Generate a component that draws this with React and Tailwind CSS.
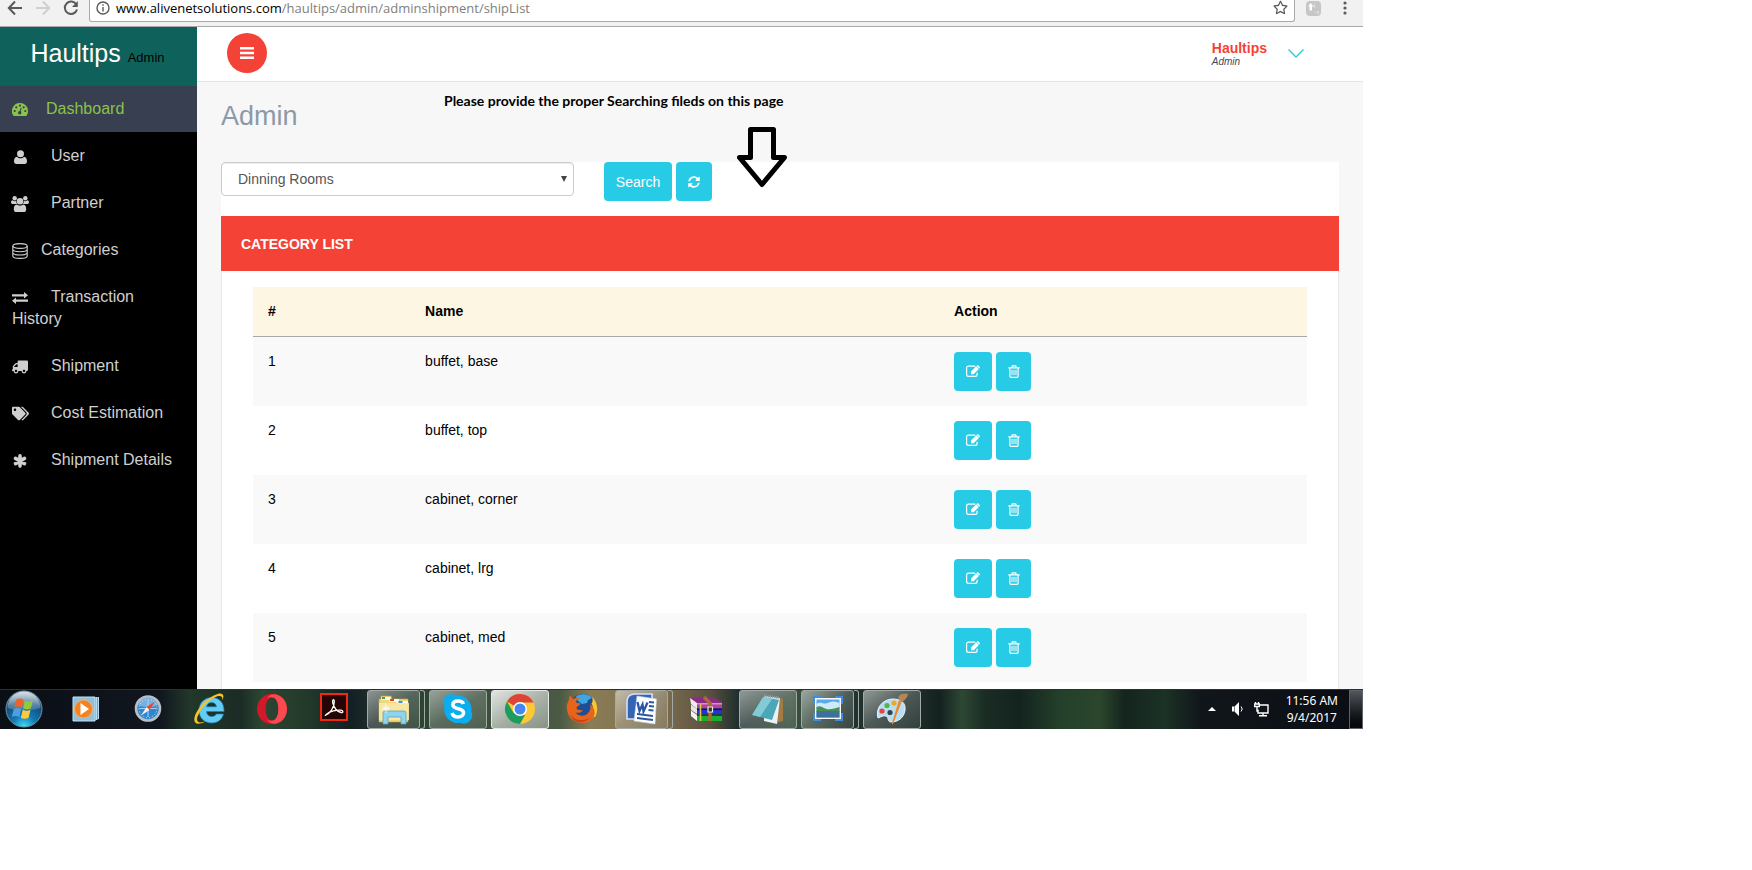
import React from "react";
import { FaTruck, FaTags, FaSyncAlt, FaRegStar } from "react-icons/fa";

const ARIAL = "font-['Liberation_Sans',Arial,sans-serif]";

function IconGauge() {
  return (
    <svg viewBox="0 0 16 13" className="h-[13px] w-4" aria-hidden="true">
      <path d="M8 0a8 8 0 0 1 8 8c0 1.700-.5 3.200-1.300 4.500-.2.300-.5.500-.8.500H2.100c-.3 0-.6-.2-.8-.5A8 8 0 0 1 8 0z" fill="#8bc34a" />
      <g fill="#373f50">
        <circle cx="2.700" cy="8" r="1.100" /><circle cx="4.300" cy="4.300" r="1.100" /><circle cx="8" cy="2.600" r="1.100" /><circle cx="11.700" cy="4.300" r="1.100" /><circle cx="13.300" cy="8" r="1.100" />
        <circle cx="7.700" cy="9.700" r="1.700" /><path d="m8.700 4.800 1 .3-1.200 4.700-1-.3z" />
      </g>
    </svg>
  );
}

function IconUser() {
  return (
    <svg viewBox="0 0 13 14" className="h-[14px] w-[13px]" fill="currentColor" aria-hidden="true">
      <circle cx="6.500" cy="3.700" r="3.500" />
      <path d="M3 6.700C4 7.700 5.200 8.200 6.500 8.200S9 7.700 10 6.700c2.200.2 3 2.300 3 4.800 0 1.600-1 2.500-2.400 2.500H2.400C1 14 0 13.100 0 11.500c0-2.500.8-4.600 3-4.800z" />
    </svg>
  );
}

function IconUsers() {
  return (
    <svg viewBox="0 0 18 16" className="h-4 w-[18px]" fill="currentColor" aria-hidden="true">
      <circle cx="3.700" cy="2.300" r="2.200" /><circle cx="14.300" cy="2.300" r="2.200" />
      <circle cx="9" cy="5.300" r="3.300" />
      <path d="M1.700 4.300c1.200 1 2.400 1 3.400.5 0 1.200.3 2.300 1 3.200H2C.7 8 0 7.300 0 6.500c0-1 .5-2.300 1.700-2.200zM16.300 4.300c-1.200 1-2.400 1-3.400.5 0 1.200-.3 2.300-1 3.200H16c1.300 0 2-.7 2-1.500 0-1-.5-2.300-1.700-2.200z" />
      <path d="M5.700 8.500c2 1.500 4.600 1.500 6.600 0 2.200.1 2.900 2.200 2.900 4.900 0 1.600-1 2.600-2.600 2.600H5.400c-1.600 0-2.600-1-2.600-2.600 0-2.700.7-4.800 2.900-4.900z" />
    </svg>
  );
}

function IconAsterisk() {
  return (
    <svg viewBox="0 0 14 14" className="size-[14px]" fill="none" stroke="currentColor" strokeWidth="3.600" strokeLinecap="round" aria-hidden="true">
      <path d="M7 1.900v10.200M2.500 4.400l9 5.200M11.500 4.400l-9 5.200" />
    </svg>
  );
}

function IconExchange() {
  return (
    <svg viewBox="0 0 16 12" className="h-3 w-4" fill="currentColor" aria-hidden="true">
      <path d="M0 2.200h12V0l4 3.300-4 3.200V4.400H0zM16 7.600H4V5.500L0 8.800 4 12V9.800h12z" />
    </svg>
  );
}

function IconDatabase() {
  return (
    <svg viewBox="0 0 16 16" className="h-4 w-4" fill="none" stroke="currentColor" strokeWidth="1.100" aria-hidden="true">
      <ellipse cx="8" cy="3" rx="7.200" ry="2.400" />
      <path d="M.8 3v10c0 1.300 3.200 2.400 7.200 2.400s7.200-1.100 7.200-2.400V3M.8 6.300c0 1.300 3.200 2.400 7.200 2.400s7.200-1.100 7.200-2.400M.8 9.600C.8 10.900 4 12 8 12s7.200-1.100 7.200-2.400" />
    </svg>
  );
}

function IconEdit() {
  return (
    <svg viewBox="0 0 14 12" className="h-3 w-[14px]" aria-hidden="true">
      <path d="M9.300 1.100H2.600Q.6 1.100.6 3v6.500q0 1.900 2 1.900h6.500q2 0 2-1.900V7.700" fill="none" stroke="currentColor" strokeWidth="1.200" />
      <path d="M5 9.200V6.500L10.200 1.300l2.700 2.700L7.700 9.200zM10.900.6q.8-.8 1.500-.1l1.200 1.200q.7.700-.1 1.500l-.3.300L10.600.9z" fill="currentColor" />
    </svg>
  );
}

function IconTrash() {
  return (
    <svg viewBox="0 0 12 13" className="h-[13px] w-3" fill="none" stroke="currentColor" strokeWidth="1.200" aria-hidden="true">
      <path d="M.3 2.900h11.400M3.700 2.700 4.300.9h3.400l.6 1.800M1.900 3v8q0 1.300 1.100 1.300h6q1.100 0 1.100-1.300V3" />
      <path d="M4 4.800v5.400M6 4.800v5.400M8 4.800v5.400" strokeWidth="1" />
    </svg>
  );
}

const NAV = [
  { label: "Dashboard", icon: <IconGauge />, gap: "pl-[18px]", active: true },
  { label: "User", icon: <IconUser />, gap: "pl-[23px]" },
  { label: "Partner", icon: <IconUsers />, gap: "pl-[23px]" },
  { label: "Categories", icon: <IconDatabase />, gap: "pl-[13px]" },
  { label: "Transaction History", icon: <IconExchange />, gap: "pl-[23px]" },
  { label: "Shipment", icon: <FaTruck size={16} className="-scale-x-100" />, gap: "pl-[23px]" },
  { label: "Cost Estimation", icon: <FaTags size={17} />, gap: "pl-[23px]" },
  { label: "Shipment Details", icon: <IconAsterisk />, gap: "pl-[23px]" },
];

const ROWS = ["buffet, base", "buffet, top", "cabinet, corner", "cabinet, lrg", "cabinet, med"];

function BrowserBar() {
  return (
    <div className="flex h-[27px] items-start border-b border-[#a9a9a9] bg-[#f1f1f1] text-[#5a5a5a]">
      <div className="flex h-4 w-[89px] shrink-0 items-center gap-3 pl-[7px]">
        <button type="button" aria-label="Back">
          <svg viewBox="0 0 16 16" className="size-4" fill="none" stroke="currentColor" strokeWidth="2"><path d="M15 8H2M8 1.500 1.800 8 8 14.500" /></svg>
        </button>
        <button type="button" aria-label="Forward" className="text-[#d0d0d0]">
          <svg viewBox="0 0 16 16" className="size-4" fill="none" stroke="currentColor" strokeWidth="2"><path d="M1 8h13M8 1.500 14.200 8 8 14.500" /></svg>
        </button>
        <button type="button" aria-label="Reload">
          <svg viewBox="0 0 16 16" className="size-4" fill="none" stroke="currentColor" strokeWidth="2"><path d="M13.300 4.500A6.200 6.200 0 1 0 14 9.500" /><path d="M14.800 1v6H9z" fill="currentColor" stroke="none" /></svg>
        </button>
      </div>
      <div className="flex h-[22px] min-w-0 flex-1 items-start rounded-b-[3px] border border-t-0 border-[#a9a9a9] bg-white px-[6px]">
        <svg viewBox="0 0 14 14" className="mt-px size-[14px] shrink-0" fill="none" stroke="currentColor" strokeWidth="1.400" aria-hidden="true">
          <circle cx="7" cy="7" r="6" /><path d="M7 6v4.500M7 3.300v1.500" />
        </svg>
        <p className="min-w-0 flex-1 truncate pl-[6px] font-['Open_Sans','Noto_Sans',sans-serif] text-[13px] leading-4 text-[#808080]">
          <span className="text-black">www.alivenetsolutions.com</span>/haultips/admin/adminshipment/shipList
        </p>
        <button type="button" aria-label="Bookmark this page"><FaRegStar size={15} /></button>
      </div>
      <div className="flex h-4 w-[68px] shrink-0 items-center justify-between pr-4 pl-[11px]">
        <button type="button" aria-label="Extension" className="grid size-[15px] place-items-center rounded-sm bg-[#c6c6c6]">
          <svg viewBox="0 0 15 15" className="size-[15px]" aria-hidden="true">
            <path d="M4.700 2 7.500 5.500H6v4H3.500v-4H2z" fill="#fff" />
            <path d="M8.500 3v3.500M7.500 5.500l1 1 1-1M8.500 10.500l1.500 1.500 1-1.500h1.500v2.500h-1" fill="none" stroke="#e6e6e6" strokeWidth=".8" />
          </svg>
        </button>
        <button type="button" aria-label="Menu">
          <svg viewBox="0 0 4 14" className="h-[14px] w-1" fill="currentColor"><circle cx="2" cy="2" r="1.600" /><circle cx="2" cy="7" r="1.600" /><circle cx="2" cy="12" r="1.600" /></svg>
        </button>
      </div>
    </div>
  );
}

function Sidebar() {
  return (
    <aside className="w-[197px] shrink-0 bg-black">
      <div className="h-[59px] bg-[#0f625b] text-center text-white">
        <h1 className="pr-[2px] text-[25px] leading-[52px]">Haultips <small className="text-[13px] text-black">Admin</small></h1>
      </div>
      <nav className="text-base leading-[22px]">
        {NAV.map((item) => (
          <a
            key={item.label}
            href="#"
            className={"block border-b border-black p-3 " + (item.active ? "bg-[#373f50] text-[#8bc34a]" : "text-[#cfcfcf]")}
          >
            <span className="inline-flex h-[18px] w-4 items-center justify-center align-middle">
              <span className="shrink-0">{item.icon}</span>
            </span>
            <span className={item.gap}>{item.label}</span>
          </a>
        ))}
      </nav>
    </aside>
  );
}

function TopBar() {
  return (
    <header className="flex h-[55px] items-start justify-between border-b border-[#e4e4e4] bg-white pr-[59px] pl-[30px]">
      <button type="button" aria-label="Toggle menu" className="mt-[6px] grid size-10 place-items-center rounded-full bg-[#f44336] text-white">
        <svg viewBox="0 0 14 12" className="h-3 w-[14px]" fill="currentColor" aria-hidden="true"><path d="M0 0h14v2.600H0zM0 4.700h14v2.600H0zM0 9.400h14V12H0z" /></svg>
      </button>
      <button type="button" className="mt-[13px] flex items-start gap-[21px] text-left">
        <span>
          <span className="block text-sm leading-4 font-bold text-[#f44336]">Haultips</span>
          <span className="block text-[10px] leading-3 text-[#3d4a5c] italic">Admin</span>
        </span>
        <svg viewBox="0 0 16 9" className="mt-[9px] h-[9px] w-4" fill="none" stroke="#27c9de" strokeWidth="1.300" aria-hidden="true"><path d="m.5.500 7.500 7.500L15.500.500" /></svg>
      </button>
    </header>
  );
}

function SearchRow() {
  return (
    <form className="flex h-[54px] items-start bg-white" onSubmit={(e) => e.preventDefault()}>
      <div className="relative w-[353px]">
        <select aria-label="Category" className="h-[34px] w-full appearance-none rounded border border-[#ccc] bg-white px-4 text-sm text-[#555] shadow-[inset_0_1px_1px_rgba(0,0,0,0.075)]">
          <option>Dinning Rooms</option>
        </select>
        <svg viewBox="0 0 6 6" className="pointer-events-none absolute top-[14px] right-[7px] size-[6px]" fill="#444" aria-hidden="true"><path d="M0 0h6L3 6z" /></svg>
      </div>
      <button type="submit" className="ml-[30px] h-[39px] w-[68px] rounded bg-[#27cbe6] text-sm text-white">Search</button>
      <button type="reset" aria-label="Refresh" className="ml-1 grid h-[39px] w-9 place-items-center rounded bg-[#27cbe6] text-white">
        <FaSyncAlt size={12} />
      </button>
    </form>
  );
}

function CategoryTable() {
  return (
    <table className="w-full table-fixed text-left text-sm leading-5 text-black">
      <thead>
        <tr className="h-[49px] border-b border-[#a9a9a9] bg-[#fdf6e3]">
          <th scope="col" className="w-[15%] px-[15px]">#</th>
          <th scope="col" className="w-1/2 px-[14px]">Name</th>
          <th scope="col" className="px-4">Action</th>
        </tr>
      </thead>
      <tbody>
        {ROWS.map((name, i) => (
          <tr key={name} className="align-top odd:bg-[#f9f9f9]">
            <td className="px-[15px] py-[14px]">{i + 1}</td>
            <td className="px-[14px] py-[14px]">{name}</td>
            <td className="px-4 py-[15px]">
              <div className="flex gap-1">
                <button type="button" aria-label={"Edit " + name} className="grid h-[39px] w-[38px] place-items-center rounded bg-[#27cbe6] text-white"><IconEdit /></button>
                <button type="button" aria-label={"Delete " + name} className="grid h-[39px] w-[35px] place-items-center rounded bg-[#27cbe6] text-white"><IconTrash /></button>
              </div>
            </td>
          </tr>
        ))}
      </tbody>
    </table>
  );
}

/* ---- Taskbar icons, each on a 32 by 32 grid ---- */

function Ico({ children }) {
  return <svg viewBox="0 0 32 32" className="size-8" aria-hidden="true">{children}</svg>;
}

function StartOrb() {
  return (
    <svg viewBox="0 0 38 38" className="size-[38px]" aria-hidden="true">
      <defs>
        <radialGradient id="orb" cx=".5" cy="1" r=".95">
          <stop offset="0" stopColor="#3fe3ff" /><stop offset=".35" stopColor="#1479b5" /><stop offset=".75" stopColor="#134a77" /><stop offset="1" stopColor="#5c7f9b" />
        </radialGradient>
        <linearGradient id="orbShine" x1="0" y1="0" x2="0" y2="1">
          <stop offset="0" stopColor="#fff" stopOpacity=".75" /><stop offset="1" stopColor="#fff" stopOpacity=".15" />
        </linearGradient>
      </defs>
      <circle cx="19" cy="19" r="18" fill="url(#orb)" stroke="#6e8fa5" />
      <path d="M2.500 18a16.500 16.500 0 0 1 33 0c-8 3-25 3-33 0z" fill="url(#orbShine)" />
      <path d="M11.500 9.500c3-1.500 5-1 7 .2l-1.800 8c-2.500-1.300-4.500-1.500-7.400-.3z" fill="#f0622a" />
      <path d="M19.800 10.500c2.500 1.200 5 1.200 8 0l-2 8c-3 1.200-5.300 1-7.700-.2z" fill="#94c83d" />
      <path d="M8.800 18.700c3-1.200 5-.9 7.500.3l-1.900 8c-2.500-1.300-4.500-1.500-7.500-.3z" fill="#4f9fe0" />
      <path d="M17.700 19.700c2.400 1.200 4.700 1.400 7.800.2l-2 8c-3 1.200-5.200 1-7.700-.2z" fill="#fdca3b" />
    </svg>
  );
}

function MediaPlayer() {
  return (
    <Ico>
      <path d="M24 4h5v22l-5 2z" fill="#5ea4cd" /><path d="M26.500 4v23M28.500 4v22" stroke="#b9dcf0" />
      <path d="M3 4h22v24H3z" fill="#8fc0de" stroke="#c5e0ef" />
      <circle cx="13.500" cy="16" r="9" fill="#f58220" stroke="#fbb56c" strokeWidth=".8" />
      <path d="M10.500 10v12l8.500-6z" fill="#fff" />
    </Ico>
  );
}

function Safari() {
  return (
    <Ico>
      <circle cx="16" cy="15.500" r="12" fill="#2e86cf" stroke="#b9bfc4" strokeWidth="2.600" />
      <path d="M6 12a10.500 10.500 0 0 1 20 0c-6 3-14 3-20 0z" fill="#fff" opacity=".35" />
      <circle cx="16" cy="15.500" r="9" fill="none" stroke="#d7ecfa" strokeDasharray="1 2" />
      <path d="M16 7v17M7.500 15.500h17" stroke="#a9d5f3" />
      <path d="M23 8.500 17.500 17l-3-3z" fill="#e8452c" /><path d="M9 22.500 14.500 14l3 3z" fill="#f2f2f2" />
    </Ico>
  );
}

function InternetExplorer() {
  return (
    <Ico>
      <path d="M30 18.500H12.500c.3 3.200 2.300 5 5.300 5 2.200 0 3.700-.8 4.500-2.500h7.200c-1.600 6-6.200 9-11.900 9C10.500 30 5 25 5 17.500S10.500 4.500 17.800 4.500C25.500 4.500 30.300 10 30 18.500zM22.500 13.800c-.4-2.800-2.200-4.200-5-4.200-2.700 0-4.500 1.500-5 4.200z" fill="#63ccf5" stroke="#1d7fc0" strokeWidth=".7" />
      <path d="M5 20.500C.5 28.500 4 31.500 12 28c-5 3.500-13 5-11.500-3C2 16 14 4 23.500 1 29-.5 31 2.500 28 7.500c1-3.500-.5-5.200-4.500-4.200C17 5.300 8.500 13.500 5 20.500z" fill="#f7c325" />
    </Ico>
  );
}

function Opera() {
  return (
    <Ico>
      <path fillRule="evenodd" d="M16 .8a15 15.200 0 1 0 .01 0zM16 4.500c4 0 6.300 5 6.300 11.500S20 27.500 16 27.500 9.700 22.500 9.700 16 12 4.500 16 4.500z" fill="#d5172b" />
      <path d="M20 1.500c7 1.600 11 7.500 11 14.500s-4 13-11 14.700c-3 .4-7-.5-9-4.200 2 1.400 5 1.500 7 .7 3-1.500 4.300-6 4.300-11.200S21 6.500 18 4.800c-2-.8-5-.7-7 .7 2-3.500 5.500-4.800 9-4z" fill="#fa4a50" />
    </Ico>
  );
}

function Acrobat() {
  return (
    <Ico>
      <path d="M3 1h26v26H3z" fill="#260404" stroke="#f02a12" strokeWidth="2" />
      <path d="M8 22c4-1.500 8.500-8 8.300-13.500-.1-3-2.500-2-1.500 1.500C16 14.500 19 18.500 23 19.500c2.500.6 2.500-2 0-2.300C18.500 16.700 12 18.500 8.800 21c-1.800 1.500-1.800 1.800-.8 1z" fill="none" stroke="#fff" strokeWidth="1.300" />
    </Ico>
  );
}

function Explorer() {
  return (
    <Ico>
      <path d="M1 6h2V3h10l1 3h16v23H1z" fill="#f0d67c" stroke="#c9a548" strokeWidth=".6" />
      <path d="M3.500 4h9v3h-9z" fill="#fffbe6" /><path d="M4 4h3v2H4z" fill="#32a852" />
      <path d="M11 6h10v3H11z" fill="#fffbe6" /><path d="M12 6h4v2h-4z" fill="#d9412c" />
      <path d="M19 8h11v3H19z" fill="#fffbe6" /><path d="M20.500 8h4v2h-4z" fill="#3e8ede" />
      <path d="M1 10h30v17H1z" fill="#f9e8a4" opacity=".9" />
      <path d="M5 31V20q0-2 2-2h19q2 0 2 2v11h-5v-7H10v7z" fill="#8fd3ee" stroke="#4aa7cc" strokeWidth=".8" />
      <path d="M8 11v9M4 15.500h8M5.500 13l5 5M10.500 13l-5 5" stroke="#fff" strokeWidth=".8" />
    </Ico>
  );
}

function Skype() {
  return (
    <Ico>
      <path d="M9 1a8.300 8.300 0 0 1 5 1.700A13.500 13.500 0 0 1 29.300 18.500 8.300 8.300 0 0 1 18.500 29.800 13.500 13.500 0 0 1 2.500 13.500 8.300 8.300 0 0 1 9 1z" fill="#0aaeef" />
      <path d="M21.500 11c-.8-2.400-3-3-5.600-3-3 0-5 1.300-5 3.800 0 5.500 10.700 2.500 10.700 8 0 2.700-2.500 4.200-5.400 4.200-3.200 0-5.400-1.200-6.200-4" fill="none" stroke="#fff" strokeWidth="3.500" />
    </Ico>
  );
}

function Chrome() {
  return (
    <Ico>
      <circle cx="16" cy="16" r="15" fill="#fcc934" />
      <path d="M3 8.500A15 15 0 0 1 29.500 9.500H16v7z" fill="#db4437" />
      <path d="M3 8.500 9.700 20 21 22l-5 9A15 15 0 0 1 3 8.500z" fill="#1e9c5b" />
      <circle cx="16" cy="16" r="7" fill="#fff" /><circle cx="16" cy="16" r="5.500" fill="#4586f3" />
    </Ico>
  );
}

function Firefox() {
  return (
    <Ico>
      <circle cx="17" cy="14.500" r="13.500" fill="#1c4f96" />
      <path d="M10 3.500c5-3.500 13-2.500 16 1.500l-4 2-1 3-5 1-4-3z" fill="#43a5dd" />
      <path d="M25.500 3.500c6 5 7 13 4 20l-8 3c5-5 7-11 4-16 1.500-2 1.500-4.500 0-7z" fill="#fbc62c" />
      <path d="M3 7c0-2 .5-3.500 1.500-4.500.5 2 1.500 3 3 3.500 2-1.500 4-1.500 6-1-2.500 1-3.500 3-3.500 4.500l4.500 1c-.5 2-3.500 2.500-4 4 0 2.500 3 3 6.500 2.500-2 3.500-5.500 3-7.500 2.500 4 5 11.500 4 14-1.500 1.500-3 1-5.500.5-7 4 3 6.500 9 3 14A15 15 0 0 1 1 17C.5 13 1 10 3 7z" fill="#e8641b" />
      <path d="M4 21c5 7.500 14 7.500 19.500 3.500C20 30.500 8 32 4 21z" fill="#d43d1a" />
    </Ico>
  );
}

function Word() {
  return (
    <Ico>
      <path d="M1 9Q1 1 9 1h17v9L9 26H1z" fill="#3564b4" stroke="#d4e2f7" strokeWidth="1.600" />
      <path d="m11 3 19.500 3L29 31 8 28z" fill="#fff" stroke="#c6d3e6" strokeWidth=".6" />
      <path d="m11.500 9 2 9 3-6.500 1 7 4-9" fill="none" stroke="#2a56a5" strokeWidth="2.300" />
      <path d="m23 9 5 .5M23 13l5 .5M22.500 17l5 .5M11 21l16 2M11 25l16 2" stroke="#2a56a5" strokeWidth="1.900" />
    </Ico>
  );
}

function WinRar() {
  return (
    <Ico>
      <path d="m0 5 22-1 10 5v3H8z" fill="#8c2a86" />
      <path d="m0 5 7 5v6l-6-5z" fill="#eee" /><path d="M7 10h25v5.500H7z" fill="#b0419f" /><path d="M7 10h25v1.500H7z" fill="#d98ccb" />
      <path d="m1 11.500 6 4.500v5l-6-4z" fill="#e5e5e5" /><path d="M7 16h25v5.500H7z" fill="#2233d4" /><path d="M7 15.500h25V17H7z" fill="#0e124d" />
      <path d="m1 17.500 6 4.500v6l-6-5z" fill="#f3f3f3" /><path d="M7 22h25v6H7z" fill="#18b02c" /><path d="M7 21.500h25v1.300H7z" fill="#0b3d14" />
      <path d="M10.500 11v17" stroke="#e0c648" strokeWidth="1.600" />
      <path d="m14 4 6 6v18" fill="none" stroke="#a86c2c" strokeWidth="3.500" />
      <path d="M18 14h4.500v5H18z" fill="#333" stroke="#e8e8e8" strokeWidth="1.200" />
    </Ico>
  );
}

function Notepad() {
  return (
    <Ico>
      <path d="m28 5 3 1v22l-8 2z" fill="#a47a45" />
      <path d="m12 3 16 2-3 26-13-3z" fill="#e9f1f4" /><path d="m11 4 16 3-7 20L0 22z" fill="#49a7b8" /><path d="m11 4 9 2-12 18-8-2z" fill="#9bd8df" opacity=".7" />
      <path d="m12 2.500 16 2.500" stroke="#8f999e" strokeWidth="3" strokeDasharray="1 1" />
    </Ico>
  );
}

function PictureViewer() {
  return (
    <Ico>
      <path d="M1 3h8v4H5v4H1zM31 3h-8v4h4v4h4zM1 28h8v-4H5v-4H1zM31 28h-8v-4h4v-4h4z" fill="#3f8ddb" />
      <path d="M3 5h26v21H3z" fill="#f6f9fb" /><path d="M4.500 6.500h23v18h-23z" fill="#5aabea" />
      <path d="M4.500 11c5-3 7 1 11-1s8-2 12 0v8h-23z" fill="#cfeafa" /><path d="M4.500 14c4-2 6 1 10 2s9-1 13-2v4.500h-23z" fill="#4b8f55" /><path d="M4.500 18h23v6.500h-23z" fill="#3c719c" />
    </Ico>
  );
}

function Paint() {
  return (
    <Ico>
      <path d="M2 25C-1 14 8 6 17 6c8 0 13 4 12 11-1 8-7 12-14 12-4 0-2-5-5-6s-5 1-8 2z" fill="#b9def3" stroke="#e8f6fd" />
      <circle cx="6" cy="18" r="2.600" fill="#e2483d" /><circle cx="11" cy="12.500" r="2.600" fill="#57b447" /><circle cx="18" cy="10" r="2.600" fill="#f5a623" />
      <circle cx="14" cy="19.500" r="2.600" fill="#33454f" />
      <path d="M26 8 17 31l-1 1 .5-4L23 7z" fill="#e98a2f" /><path d="M22 5c1-4 4-5 10-4-1 4-3 6-6 8z" fill="#b3875a" />
    </Ico>
  );
}

const TASKS = [
  { name: "Windows Media Player", icon: <MediaPlayer /> },
  { name: "Safari", icon: <Safari /> },
  { name: "Internet Explorer", icon: <InternetExplorer /> },
  { name: "Opera", icon: <Opera /> },
  { name: "Acrobat Reader", icon: <Acrobat /> },
  { name: "File Explorer", icon: <Explorer />, state: "stack" },
  { name: "Skype", icon: <Skype />, state: "open" },
  { name: "Chrome", icon: <Chrome />, state: "focus" },
  { name: "Firefox", icon: <Firefox /> },
  { name: "Word", icon: <Word />, state: "stack" },
  { name: "WinRAR", icon: <WinRar /> },
  { name: "Notepad", icon: <Notepad />, state: "open" },
  { name: "Picture viewer", icon: <PictureViewer />, state: "stack" },
  { name: "Paint", icon: <Paint />, state: "open" },
];

const TASK_STYLE = {
  open: "w-[58px] border border-[#a3aaa5] bg-linear-to-br from-white/50 via-white/20 to-white/10",
  stack: "w-[53px] border border-[#a3aaa5] bg-linear-to-br from-white/50 via-white/20 to-white/10",
  focus: "w-[58px] border border-[#e6e8e6] bg-linear-to-br from-white/85 via-white/55 to-white/35",
  idle: "w-[58px]",
};

function Taskbar() {
  return (
    <footer className="flex h-10 items-stretch overflow-hidden border-t border-[#2a2f38] bg-[linear-gradient(90deg,#0a0e15_0px,#10161f_160px,#22382a_190px,#1b2b25_240px,#2c4732_262px,#22382a_310px,#131f24_350px,#1d2c2b_370px,#2f4634_430px,#4a5a45_560px,#8a7c55_590px,#7d6f50_660px,#5a5040_710px,#1f302e_738px,#3a5240_790px,#22322e_850px,#1c2c28_920px,#14221f_940px,#2e4834_962px,#1a2c24_985px,#14231f_1020px,#24402a_1060px,#2b462c_1100px,#14241e_1125px,#1c3225_1165px,#11161b_1200px,#0a0e14_1363px)]">
      <button type="button" aria-label="Start" className="flex w-14 shrink-0 items-center pl-[5px]"><StartOrb /></button>
      <div className="flex shrink-0">
        {TASKS.map((t) => (
          <div key={t.name} className="flex w-[62px] items-stretch pl-px">
            <button type="button" aria-label={t.name} className={"grid place-items-center rounded-[3px] " + TASK_STYLE[t.state || "idle"]}>
              {t.icon}
            </button>
            {t.state === "stack" && <span className="w-[5px] rounded-r-[3px] border border-l-0 border-[#a3aaa5]" />}
          </div>
        ))}
      </div>
      <div className="ml-auto flex items-center text-white">
        <button type="button" aria-label="Show hidden icons" className="mr-4">
          <svg viewBox="0 0 8 4" className="h-1 w-2" fill="currentColor"><path d="M4 0l4 4H0z" /></svg>
        </button>
        <button type="button" aria-label="Volume" className="mr-[10px]">
          <svg viewBox="0 0 12 14" className="h-[14px] w-3"><path d="M0 4.500h2V9.500H0zM2.500 4.500 7 0v14L2.500 9.500z" fill="currentColor" /><path d="M9 4.500q2.500 2.500 0 5" fill="none" stroke="currentColor" /></svg>
        </button>
        <button type="button" aria-label="Network" className="mr-[17px]">
          <svg viewBox="0 0 15 15" className="size-[15px]" fill="none" stroke="currentColor" strokeWidth="1.400"><path d="M6 3h8v8H4V7.500M9 11v2.500M5 13.800h8" /><path d="M.7 2h4.600v2.500H.7zM3 4.500V9h1M1.500 0v2M4.500 0v2" /></svg>
        </button>
        <div className="mr-[11px] text-center font-['Noto_Sans','Open_Sans',sans-serif] text-xs leading-[17px]">
          <p>11:56 AM</p>
          <p>9/4/2017</p>
        </div>
        <button type="button" aria-label="Show desktop" className="h-full w-[14px] border border-[#5d6268] bg-linear-to-b from-white/30 to-black/40" />
      </div>
    </footer>
  );
}

export default function App() {
  return (
    <div className={"min-h-screen bg-white " + ARIAL}>
      <div className="w-full max-w-[1363px]">
        <BrowserBar />
        <div className="flex">
          <Sidebar />
          <div className="min-w-0 flex-1 bg-[#f7f7f7]">
            <TopBar />
            <main className="relative px-6">
              <h2 className="h-20 pt-4 text-[27px] leading-9 text-[#8d99a8]">Admin</h2>
              <p className="pointer-events-none absolute top-[9px] left-[247px] font-[Lato,'Open_Sans',sans-serif] text-sm leading-5 font-bold whitespace-nowrap text-black">
                Please provide the proper Searching fileds on this page
              </p>
              <svg viewBox="0 0 50 62" className="pointer-events-none absolute top-11 left-[540px] h-[62px] w-[50px]" fill="none" stroke="#000" strokeWidth="5" strokeLinejoin="round" aria-hidden="true">
                <path d="M13.500 3.500h23v28h11L25 58.500 2.500 31.500h11z" />
              </svg>
              <SearchRow />
              <section>
                <h3 className="h-[55px] bg-[#f44336] px-5 text-sm leading-[57px] font-bold text-white">CATEGORY LIST</h3>
                <div className="border-x border-[#e8e8e8] bg-white px-[31px] pt-4 pb-[7px]">
                  <CategoryTable />
                </div>
              </section>
            </main>
          </div>
        </div>
        <Taskbar />
      </div>
    </div>
  );
}
